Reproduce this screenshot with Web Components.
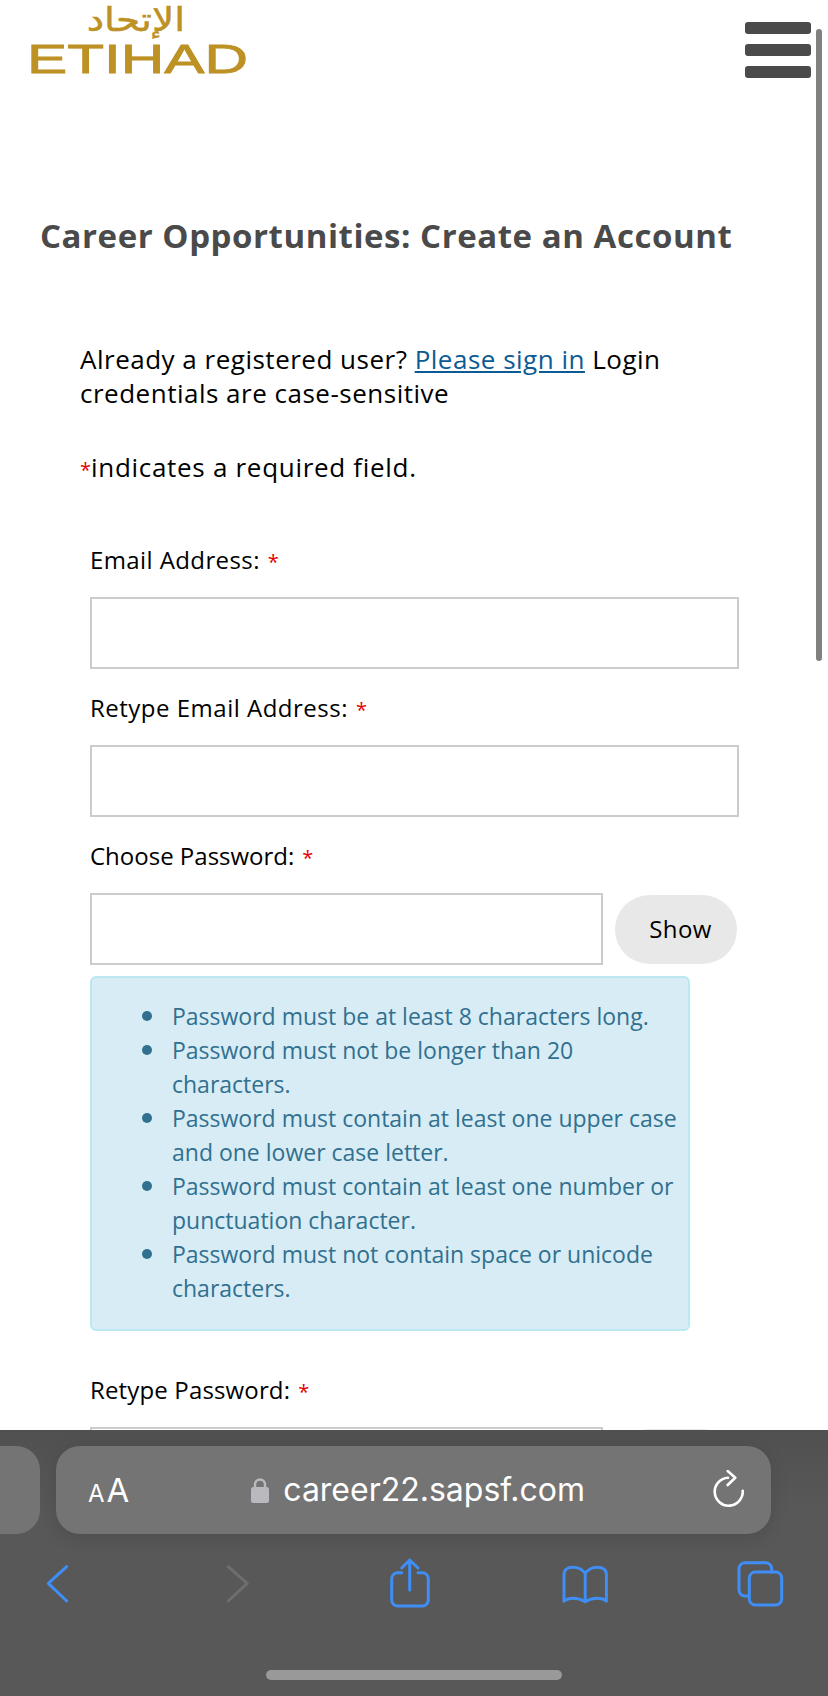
<!DOCTYPE html>
<html lang="en">
<head>
<meta charset="utf-8">
<title>Career Opportunities: Create an Account</title>
<style>
  html, body { margin: 0; padding: 0; background: #fff; }
  body { font-family: "Open Sans", "DejaVu Sans", sans-serif; }
</style>
</head>
<body>
<app-shell>
  <site-header></site-header>
  <page-heading>Career Opportunities: Create an Account</page-heading>
  <intro-note></intro-note>
  <form-field label="Email Address:" style="letter-spacing:.4px"></form-field>
  <form-field label="Retype Email Address:" style="letter-spacing:.5px"></form-field>
  <form-field label="Choose Password:" secret></form-field>
  <password-hints></password-hints>
  <form-field label="Retype Password:" secret style="letter-spacing:.15px"></form-field>
  <safari-bar slot="chrome"></safari-bar>
</app-shell>

<script>
const TEXT_FONT = '"Open Sans", "DejaVu Sans", sans-serif';

class AppShell extends HTMLElement {
    connectedCallback() {
        this.attachShadow({ mode: 'open' });
        this.shadowRoot.innerHTML = `
            <style>
                :host {
                    display: flex;
                    flex-direction: column;
                    position: relative;
                    width: 828px;
                    height: 1696px;
                    overflow: hidden;
                    background: #fff;
                }
                main {
                    height: 1430px;
                    overflow: hidden;
                    flex: none;
                }
                .scroll-thumb {
                    position: absolute;
                    top: 29px;
                    right: 6px;
                    width: 6px;
                    height: 632px;
                    border-radius: 3px;
                    background: #808080;
                }
            </style>
            <main><slot></slot></main>
            <slot name="chrome"></slot>
            <div class="scroll-thumb"></div>
        `;
    }
}

class SiteHeader extends HTMLElement {
    connectedCallback() {
        this.attachShadow({ mode: 'open' });
        this.shadowRoot.innerHTML = `
            <style>
                :host {
                    display: flex;
                    justify-content: space-between;
                    align-items: flex-start;
                    height: 90px;
                    padding: 0 17px 0 29px;
                }
                svg { display: block; overflow: visible; }
                .menu {
                    display: flex;
                    flex-direction: column;
                    gap: 10px;
                    margin-top: 22px;
                }
                .menu span {
                    display: block;
                    width: 66px;
                    height: 12px;
                    border-radius: 3px;
                    background: #4a4a4a;
                }
            </style>
            <svg width="220" height="78" viewBox="0 0 220 78">
                <text transform="translate(156 31) scale(1.5 1.25)" font-family="DejaVu Sans" font-weight="400" font-size="26" fill="#bd9124" stroke="#bd9124" stroke-width=".4" direction="rtl">الإتحاد</text>
                <text x="-2" y="73" font-family="Liberation Sans" font-weight="400" font-size="40" fill="#bd9124" stroke="#bd9124" stroke-width=".8" textLength="221" lengthAdjust="spacingAndGlyphs">ETIHAD</text>
            </svg>
            <div class="menu"><span></span><span></span><span></span></div>
        `;
    }
}

class PageHeading extends HTMLElement {
    connectedCallback() {
        this.attachShadow({ mode: 'open' });
        this.shadowRoot.innerHTML = `
            <style>
                :host {
                    display: block;
                    margin: 126px 0 0 40px;
                    font: 700 33px/40px ${TEXT_FONT};
                    letter-spacing: .55px;
                    color: #4a4a4a;
                    white-space: nowrap;
                }
            </style>
            <slot></slot>
        `;
    }
}

class IntroNote extends HTMLElement {
    connectedCallback() {
        this.attachShadow({ mode: 'open' });
        this.shadowRoot.innerHTML = `
            <style>
                :host {
                    display: block;
                    margin: 86px 70px 0 80px;
                    font: 400 26px/34px ${TEXT_FONT};
                    color: #000;
                }
                a { color: #0b5c94; text-decoration: underline; }
                p { margin: 0 0 40px; letter-spacing: .5px; }
                p:last-child { margin-bottom: 0; letter-spacing: .7px; }
                .req { color: #e60000; font-size: 20px; line-height: 0; letter-spacing: 0; }
            </style>
            <p>Already a registered user? <a href="#">Please sign in</a> Login<br>credentials are case-sensitive</p>
            <p><span class="req">*</span>indicates a required field.</p>
        `;
    }
}

class FormField extends HTMLElement {
    connectedCallback() {
        const label = this.getAttribute('label');
        const secret = this.hasAttribute('secret');
        this.attachShadow({ mode: 'open' });
        this.shadowRoot.innerHTML = `
            <style>
                :host {
                    display: block;
                    margin: 22px 0 0 90px;
                    width: 649px;
                    font-family: ${TEXT_FONT};
                    font-size: 24px;
                    line-height: 34px;
                    color: #000;
                }
                :host(:first-of-type) { margin-top: 59px; }
                label { display: block; margin-bottom: 20px; }
                .req { color: #e60000; margin-left: 8px; font-size: 20px; line-height: 0; }
                .row { display: flex; align-items: center; gap: 12px; }
                input {
                    flex: 1;
                    min-width: 0;
                    height: 72px;
                    box-sizing: border-box;
                    border: 2px solid #ccc;
                    background: #fff;
                    margin: 0;
                    padding: 0 10px;
                    border-radius: 0;
                    outline: none;
                }
                .row.secret input { flex: none; width: 513px; }
                button {
                    flex: none;
                    width: 122px;
                    height: 69px;
                    border: 0;
                    border-radius: 35px;
                    background: #e8e8e8;
                    color: #000;
                    font: inherit;
                    letter-spacing: .4px;
                    padding: 0 0 0 9px;
                }
            </style>
            <label>${label}<span class="req">*</span></label>
            <div class="row ${secret ? 'secret' : ''}">
                <input type="${secret ? 'password' : 'text'}">
                ${secret ? '<button type="button">Show</button>' : ''}
            </div>
        `;
    }
}

class PasswordHints extends HTMLElement {
    connectedCallback() {
        const rules = [
            'Password must be at least 8 characters long.',
            'Password must not be longer than 20 characters.',
            'Password must contain at least one upper case and one lower case letter.',
            'Password must contain at least one number or punctuation character.',
            'Password must not contain space or unicode characters.'
        ];
        this.attachShadow({ mode: 'open' });
        this.shadowRoot.innerHTML = `
            <style>
                :host {
                    display: block;
                    box-sizing: border-box;
                    width: 600px;
                    margin: 11px 0 42px 90px;
                    padding: 21px 8px 24px 80px;
                    border: 2px solid #bce8f1;
                    border-radius: 6px;
                    background: #d7ecf5;
                    color: #31708f;
                    font: 400 23px/34px ${TEXT_FONT};
                }
                ul { margin: 0; padding: 0; list-style: none; }
                li { display: flex; align-items: flex-start; }
                li::before {
                    content: '';
                    flex: none;
                    width: 10px;
                    height: 10px;
                    margin: 12px 20px 0 -30px;
                    border-radius: 50%;
                    background: #31708f;
                }
            </style>
            <ul>${rules.map(r => `<li><span>${r}</span></li>`).join('')}</ul>
        `;
    }
}

class SafariBar extends HTMLElement {
    connectedCallback() {
        this.attachShadow({ mode: 'open' });
        this.shadowRoot.innerHTML = `
            <style>
                :host {
                    display: block;
                    flex: 1;
                    background: linear-gradient(#505050, #585858 30%);
                }
                .address-row {
                    display: flex;
                    gap: 16px;
                    padding-top: 16px;
                }
                .prev-tab {
                    flex: none;
                    width: 40px;
                    height: 88px;
                    border-radius: 0 24px 24px 0;
                    background: #747474;
                }
                .address {
                    display: flex;
                    align-items: center;
                    justify-content: space-between;
                    box-sizing: border-box;
                    width: 715px;
                    height: 88px;
                    padding: 0 24px 0 32px;
                    border-radius: 24px;
                    background: #747474;
                    box-shadow: 0 4px 18px rgba(0, 0, 0, 0.12);
                    color: #fff;
                    font-family: Inter, Roboto, sans-serif;
                }
                .aa { display: flex; align-items: baseline; gap: 2px; font-weight: 400; }
                .aa .s { font-size: 24px; }
                .aa .b { font-size: 33px; }
                .host {
                    display: flex;
                    align-items: center;
                    gap: 14px;
                    margin-right: 4px;
                    font-size: 32px;
                    line-height: 40px;
                }
                svg { display: block; flex: none; }
                .tools {
                    display: flex;
                    justify-content: space-between;
                    padding: 19px 38px 0 28px;
                }
                .tools svg {
                    fill: none;
                    stroke: #3f8ef5;
                    stroke-width: 3;
                    stroke-linecap: round;
                    stroke-linejoin: round;
                }
                .tools svg.off { stroke: #6e6e6e; }
                .home {
                    width: 296px;
                    height: 10px;
                    margin: 57px auto 0;
                    border-radius: 5px;
                    background: #999;
                }
            </style>
            <div class="address-row">
                <div class="prev-tab"></div>
                <div class="address">
                    <div class="aa"><span class="s">A</span><span class="b">A</span></div>
                    <div class="host">
                        <svg width="18" height="26" viewBox="0 0 18 26">
                            <path d="M4 12V7.5a5 5 0 0 1 10 0V12" fill="none" stroke="#b9b9bf" stroke-width="2.4"/>
                            <rect x="0" y="10" width="18" height="16" rx="2.5" fill="#b9b9bf"/>
                        </svg>
                        <span>career22.sapsf.com</span>
                    </div>
                    <svg width="36" height="40" viewBox="0 2 36 40" fill="none" stroke="#fff" stroke-width="2.6" stroke-linecap="round" stroke-linejoin="round">
                        <path d="M17 9.7A14 14 0 1 0 31.7 22.7"/>
                        <path d="M16.7 3l7.6 6.7L16.7 17"/>
                    </svg>
                </div>
            </div>
            <div class="tools">
                <svg width="60" height="60" viewBox="0 0 60 60"><path d="M38.7 13.7L20.3 30.3L38.7 48"/></svg>
                <svg class="off" width="60" height="60" viewBox="0 0 60 60"><path d="M24.2 13.7L43.2 30.3L24.2 48"/></svg>
                <svg width="60" height="60" viewBox="0 0 60 60">
                    <path d="M22.7 19.7H18.7a6 6 0 0 0-6 6V47a6 6 0 0 0 6 6H43.3a6 6 0 0 0 6-6V25.7a6 6 0 0 0-6-6H39"/>
                    <path d="M30.7 7V37M22.7 15L30.7 7L39 15"/>
                </svg>
                <svg width="60" height="60" viewBox="0 0 60 60">
                    <path d="M30.2 20.2C27 16 22 14.2 18 14.2C12.5 14.2 9 17 9 21.5V48.2C13 44.5 22.5 44 30.2 48.7C37.9 44 47.4 44.5 51.4 48.2V21.5C51.4 17 47.9 14.2 42.4 14.2C38.4 14.2 33.4 16 30.2 20.2V48.7"/>
                </svg>
                <svg width="60" height="60" viewBox="0 0 60 60">
                    <path d="M19 43H15a6 6 0 0 1-6-6V15.7a6 6 0 0 1 6-6H35.7a6 6 0 0 1 6 6V19"/>
                    <rect x="19.3" y="19" width="32.4" height="33" rx="6"/>
                </svg>
            </div>
            <div class="home"></div>
        `;
    }
}

customElements.define('app-shell', AppShell);
customElements.define('site-header', SiteHeader);
customElements.define('page-heading', PageHeading);
customElements.define('intro-note', IntroNote);
customElements.define('form-field', FormField);
customElements.define('password-hints', PasswordHints);
customElements.define('safari-bar', SafariBar);
</script>
</body>
</html>
